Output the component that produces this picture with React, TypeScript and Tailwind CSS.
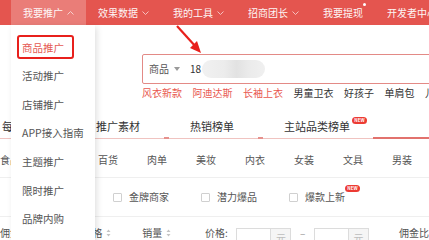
import React from "react";

const navItems = [
  { label: "我要推广", chevron: "up", active: true },
  { label: "效果数据", chevron: "down" },
  { label: "我的工具", chevron: "down" },
  { label: "招商团长", chevron: "down" },
  { label: "我要提现", dot: true },
  { label: "开发者中心" },
];

const menuItems = ["商品推广", "活动推广", "店铺推广", "APP接入指南", "主题推广", "限时推广", "品牌内购"];

const hotWords = [
  { text: "风衣新款", hot: true },
  { text: "阿迪达斯", hot: true },
  { text: "长袖上衣", hot: true },
  { text: "男童卫衣" },
  { text: "好孩子" },
  { text: "单肩包" },
  { text: "儿童" },
];

const tabs = ["每日爆款", "推广素材", "热销榜单", "主站品类榜单"];
const cats = ["食品", "母婴", "百货", "肉单", "美妆", "内衣", "女装", "文具", "男装"];

function Chevron({ up }: { up?: boolean }) {
  return (
    <svg width="7" height="4" viewBox="0 0 7 4" className="ml-1 opacity-70">
      <polyline
        points={up ? "0.5,3.5 3.5,0.5 6.5,3.5" : "0.5,0.5 3.5,3.5 6.5,0.5"}
        fill="none"
        stroke="white"
        strokeWidth="0.9"
      />
    </svg>
  );
}

function NewBadge() {
  return (
    <span className="flex items-center justify-center w-[15px] h-[7px] rounded-full bg-[#ec3b33] text-white text-[4.5px] font-bold leading-none">
      NEW
    </span>
  );
}

function SortIcon() {
  return (
    <svg width="5" height="8" viewBox="0 0 5 8" className="ml-[4px]">
      <polygon points="2.5,0.5 4.5,3 0.5,3" fill="#c4c4c4" />
      <polygon points="0.5,5 4.5,5 2.5,7.5" fill="#c4c4c4" />
    </svg>
  );
}

function Checkbox({ label, isNew }: { label: string; isNew?: boolean }) {
  return (
    <div className="w-[88px] flex items-center">
      <span className="w-[9px] h-[9px] border border-[#d0d0d0] rounded-[1px] bg-white" />
      <span className="ml-[7px] flex items-start text-[#555]">
        {label}
        {isNew && (
          <span className="-mt-[6px]">
            <NewBadge />
          </span>
        )}
      </span>
    </div>
  );
}

function PriceInput() {
  return (
    <div className="flex h-[20px] mt-[1px] border border-[#dcdcdc]">
      <div className="w-[33px] bg-white" />
      <div className="w-[20px] bg-[#f5f5f5] border-l border-[#dcdcdc] flex items-center justify-center text-[#bdbdbd]">
        元
      </div>
    </div>
  );
}

export default function App() {
  return (
    <div className="w-[429px] h-[240px] overflow-hidden bg-white relative font-['Noto_Sans_CJK_SC','Microsoft_YaHei',sans-serif] text-[10px] leading-[12px]">
      <nav className="h-[25px] bg-[#e4554f] flex pl-[11px] text-white whitespace-nowrap">
        {navItems.map((n) => (
          <div
            key={n.label}
            className={`flex items-center px-3 h-full ${n.active ? "bg-[#ea7d78]" : ""} ${n.dot ? "pr-[9px]" : ""}`}
          >
            <span className="opacity-95">{n.label}</span>
            {n.chevron && <Chevron up={n.chevron === "up"} />}
            {n.dot && <span className="self-start mt-[3px] w-[3px] h-[3px] rounded-full bg-white" />}
          </div>
        ))}
      </nav>

      <main className="relative">
        {/* search */}
        <div className="pl-[142px] pt-[29px]">
          <div className="w-[320px] h-[30px] border border-[#e38a86] rounded-[2px] flex items-center pl-[6px] text-[#333]">
            <span className="text-[#555]">商品</span>
            <svg width="6" height="4" viewBox="0 0 6 4" className="ml-[5px]">
              <polygon points="0,0 6,0 3,4" fill="#9a9a9a" />
            </svg>
            <span className="ml-[10px]">18</span>
            <div className="ml-[1px] w-[63px] h-[18px] rounded-full bg-[linear-gradient(90deg,#f1f1f1_0%,#ececec_35%,#e2e2e2_55%,#ebebeb_75%,#f0f0f0_100%)]" />
          </div>
          <div className="flex h-[16px] items-center mt-[1px] whitespace-nowrap">
            {hotWords.map((w) => (
              <span
                key={w.text}
                className={`mr-[10.5px] shrink-0 ${w.hot ? "text-[#e8574f]" : "text-[#333]"}`}
              >
                {w.text}
              </span>
            ))}
          </div>
        </div>

        {/* tabs */}
        <div className="flex pl-[2px] mt-[13px] text-[11px] text-[#333] whitespace-nowrap">
          <div className="w-[2px] -ml-[2px] flex flex-col justify-end">
            <div className="h-px bg-[#f0c3c0]" />
          </div>
          {tabs.map((t, i) => (
            <div key={t} className={`${i === 3 ? "w-[89px]" : "w-[94px]"} flex flex-col`}>
              <div className="h-[23px] flex items-center">
                <span>{t}</span>
                {i === 3 && (
                  <span className="self-start mt-[3px] ml-[2px]">
                    <NewBadge />
                  </span>
                )}
              </div>
              <div className="h-[2px] flex items-end">
                <div className="w-[68px] h-px bg-[#f0c3c0]" />
                {i < 3 && <div className="w-[5px] h-[2px] bg-[#e6918d]" />}
                <div className="flex-1 h-px bg-[#f0c3c0]" />
              </div>
            </div>
          ))}
          <div className="flex-1 flex flex-col justify-end">
            <div className="h-[2px] bg-[#e2726d]" />
          </div>
        </div>

        {/* categories */}
        <div className="flex h-[39px] items-center pt-[3px] border-b border-[#efefef] text-[#555] whitespace-nowrap">
          {cats.map((c) => (
            <div key={c} className="w-[49px] shrink-0">
              {c}
            </div>
          ))}
        </div>

        {/* filters */}
        <div className="flex h-[39px] items-center pl-[113px] border-b border-[#efefef]">
          <Checkbox label="金牌商家" />
          <Checkbox label="潜力爆品" />
          <Checkbox label="爆款上新" isNew />
        </div>

        {/* sort */}
        <div className="flex items-start pt-[10px] text-[#555] whitespace-nowrap">
          <span className="w-[84px] flex items-center">
            佣金
            <SortIcon />
          </span>
          <span className="w-[61px] flex items-center">
            价格
            <SortIcon />
          </span>
          <span className="w-[64px] flex items-center">
            销量
            <SortIcon />
          </span>
          <span className="w-[32px]">价格:</span>
          <PriceInput />
          <span className="w-[23px] text-center text-[#999]">–</span>
          <PriceInput />
          <span className="ml-[30px]">佣金比</span>
        </div>

        {/* dropdown menu */}
        <div className="absolute left-[11px] top-0 w-[84px] h-[220px] bg-white shadow-[2px_2px_6px_rgba(0,0,0,0.12)] pt-[8px] text-[10.5px] text-[#555] whitespace-nowrap">
          {menuItems.map((m, i) => (
            <div key={m} className="h-[28.7px] flex items-center pl-[6px]">
              {i === 0 ? (
                <span className="w-[57px] h-[24px] border-2 border-[#e8201c] rounded-[3px] flex items-center pl-[3px] pt-[2px] text-[#e55a53]">
                  {m}
                </span>
              ) : (
                <span className="pl-[5px]">{m}</span>
              )}
            </div>
          ))}
        </div>

        {/* annotation arrow */}
        <svg width="40" height="34" viewBox="0 0 40 34" className="absolute left-[172px] top-0">
          <line x1="5" y1="1" x2="24" y2="22" stroke="#e8201c" strokeWidth="2.2" />
          <polygon points="29,28 18,23 25,16" fill="#e8201c" />
        </svg>
      </main>
    </div>
  );
}
